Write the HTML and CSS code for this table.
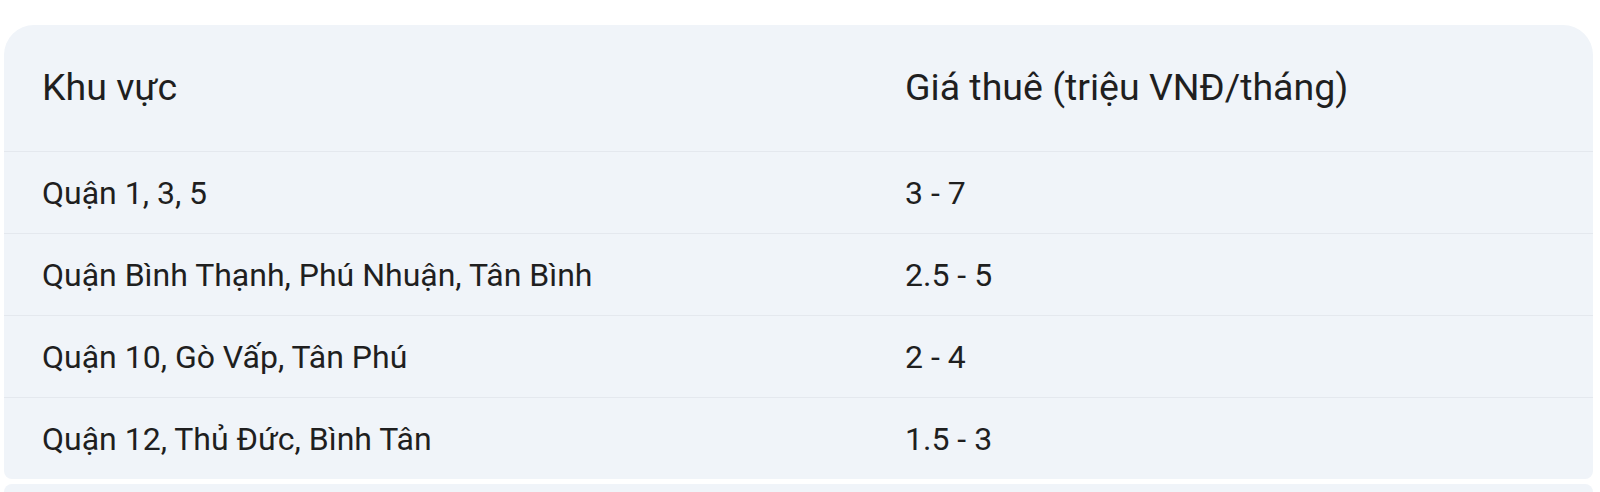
FILE: index.html
```html
<!DOCTYPE html>
<html lang="vi">
<head>
<meta charset="utf-8">
<title>Giá thuê</title>
<link rel="stylesheet" href="styles.css">
</head>
<body>
<div class="page">
  <div class="card">
    <table class="rent">
      <thead>
        <tr>
          <th class="col-area">Khu vực</th>
          <th class="col-price">Giá thuê (triệu VNĐ/tháng)</th>
        </tr>
      </thead>
      <tbody>
        <tr><td>Quận 1, 3, 5</td><td>3 - 7</td></tr>
        <tr><td>Quận Bình Thạnh, Phú Nhuận, Tân Bình</td><td>2.5 - 5</td></tr>
        <tr><td>Quận 10, Gò Vấp, Tân Phú</td><td>2 - 4</td></tr>
        <tr><td>Quận 12, Thủ Đức, Bình Tân</td><td>1.5 - 3</td></tr>
      </tbody>
    </table>
  </div>
  <div class="next-card"></div>
</div>
</body>
</html>
```

FILE: styles.css
```css
html, body {
  margin: 0;
  padding: 0;
  background: #ffffff;
}

body {
  font-family: Roboto, "Liberation Sans", sans-serif;
  color: #1f1f1f;
  overflow: hidden;
}

.page {
  padding: 25px 7px 0 4px;
}

.card {
  background: #f0f4f9;
  border-radius: 30px 30px 8px 8px;
  overflow: hidden;
}

.rent {
  width: 100%;
  border-collapse: collapse;
  table-layout: fixed;
}

.col-area {
  width: 825px;
}

.rent th,
.rent td {
  text-align: left;
  padding-left: 38px;
  padding-right: 0;
  vertical-align: middle;
}

.rent th {
  font-size: 37.5px;
  font-weight: 400;
  line-height: 48px;
  padding-top: 38px;
  padding-bottom: 40px;
}

.rent td {
  font-size: 32px;
  font-weight: 400;
  line-height: 48px;
  padding-top: 17px;
  padding-bottom: 16px;
}

.rent tbody tr {
  border-top: 1px solid #e4e8ee;
}

.next-card {
  margin-top: 5px;
  height: 8px;
  background: #f0f4f9;
  border-radius: 8px 8px 0 0;
}
```
